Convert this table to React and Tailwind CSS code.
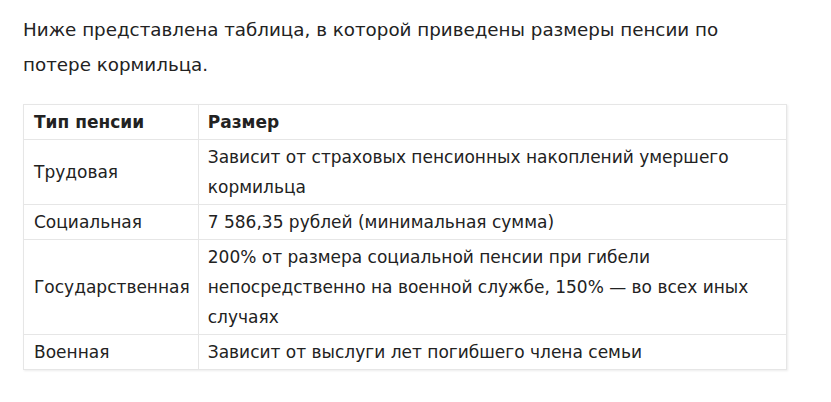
export default function App() {
  const rows = [
    ["Трудовая", "Зависит от страховых пенсионных накоплений умершего кормильца"],
    ["Социальная", "7 586,35 рублей (минимальная сумма)"],
    ["Государственная", "200% от размера социальной пенсии при гибели непосредственно на военной службе, 150% — во всех иных случаях"],
    ["Военная", "Зависит от выслуги лет погибшего члена семьи"],
  ];
  return (
    <div className="w-[831px] h-[402px] bg-white text-[#222] font-['DejaVu_Sans',sans-serif] text-[17px]">
      <div className="pl-[23px] pt-[12px]">
        <p className="leading-[35px] text-[18.3px] w-[740px]">Ниже представлена таблица, в которой приведены размеры пенсии по потере кормильца.</p>
        <table className="mt-[22px] w-[764px] border-collapse shadow-[1px_1px_2px_rgba(0,0,0,0.08)] leading-[30px]">
          <thead>
            <tr>
              <th className="border border-[#e6e6e6] text-left font-bold pl-[10px] pr-[8px] py-[2px] w-[170px]">Тип пенсии</th>
              <th className="border border-[#e6e6e6] text-left font-bold pl-[9px] pr-[10px] py-[2px]">Размер</th>
            </tr>
          </thead>
          <tbody>
            {rows.map(([a, b]) => (
              <tr key={a}>
                <td className="border border-[#e6e6e6] pl-[10px] pr-[8px] py-[2px] align-middle whitespace-nowrap">{a}</td>
                <td className="border border-[#e6e6e6] pl-[9px] py-[2px] pr-[18px]">{b}</td>
              </tr>
            ))}
          </tbody>
        </table>
      </div>
    </div>
  );
}
